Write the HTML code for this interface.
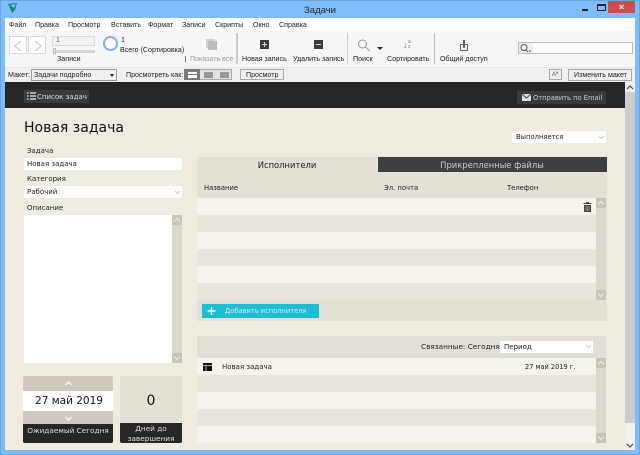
<!DOCTYPE html>
<html lang="ru"><head><meta charset="utf-8"><title>Задачи</title>
<style>
html,body{margin:0;padding:0;width:640px;height:455px;overflow:hidden;background:#7fbdf9}
*{box-sizing:border-box}
#r{position:relative;width:640px;height:455px;overflow:hidden;font-family:"Liberation Sans",sans-serif;font-size:7.1px;color:#222}
.a{position:absolute}
.t{position:absolute;white-space:nowrap;line-height:10px}
.v{font-family:"DejaVu Sans",sans-serif;font-size:7px}
.sb{position:absolute;background:#dcd8cd}
.sb i{position:absolute;left:0;width:100%;height:10px;background:#c9c4b8;display:block}
.sb i svg{position:absolute;left:2px;top:3px}
</style></head><body><div id="r">
<!-- frame -->
<div class="a" style="left:0;top:0;width:640px;height:455px;background:#7fbdf9;border:1px solid #6aa6dc"></div>
<svg class="a" style="left:7px;top:2px" width="12" height="12" viewBox="0 0 12 12"><path d="M1 2L10 1L8 8L5 11L3 6Z" fill="#1d7f8c"/><path d="M3 3L9 2L7 6Z" fill="#5fd0d8"/></svg>
<div class="t" style="left:0;width:640px;text-align:center;top:5px;font-size:9.5px;line-height:11px;color:#23282e;">Задачи</div>
<div class="a" style="left:582px;top:9px;width:6px;height:2px;background:#222"></div>
<div class="a" style="left:597px;top:4px;width:9px;height:7px;border:1px solid #223;border-top-width:2px"></div>
<div class="a" style="left:608px;top:1px;width:27px;height:12px;background:#c75050"></div>
<div class="t" style="left:608px;top:2px;width:27px;text-align:center;color:#fff;font-size:9px;font-weight:bold">×</div>
<!-- menu -->
<div class="a" style="left:5px;top:18px;width:630px;height:13px;background:#fff"></div>
<div class="t" style="left:9px;top:20px">Файл</div>
<div class="t" style="left:35px;top:20px">Правка</div>
<div class="t" style="left:68px;top:20px">Просмотр</div>
<div class="t" style="left:111px;top:20px">Вставить</div>
<div class="t" style="left:148px;top:20px">Формат</div>
<div class="t" style="left:182px;top:20px">Записи</div>
<div class="t" style="left:215px;top:20px">Скрипты</div>
<div class="t" style="left:253px;top:20px">Окно</div>
<div class="t" style="left:279px;top:20px">Справка</div>
<!-- toolbar -->
<div class="a" style="left:5px;top:31px;width:630px;height:36px;background:#f5f6f7"></div>
<div class="a" style="left:5px;top:67px;width:630px;height:15px;background:#f0f0f0;border-top:1px solid #e6e6e6"></div>
<div class="a" style="left:9px;top:36px;width:18px;height:18px;background:#fff;border:1px solid #d8d8d8"></div>
<div class="a" style="left:28px;top:36px;width:18px;height:18px;background:#fff;border:1px solid #d8d8d8"></div>
<svg class="a" style="left:9px;top:36px" width="37" height="18"><path d="M12 5L6 10L12 15M26 5L32 10L26 15" fill="none" stroke="#c4c4c4" stroke-width="1"/></svg>
<div class="a" style="left:52px;top:36px;width:43px;height:10px;background:#f2f2f2;border:1px solid #d9d9d9"></div>
<div class="t" style="left:56px;top:36px;font-size:7px;color:#666">1</div>
<div class="a" style="left:53px;top:50px;width:42px;height:3px;background:#d5d5d5"></div>
<div class="a" style="left:53px;top:48px;width:3px;height:6px;background:#f4f4f4;border:1px solid #bbb"></div>
<div class="t" style="left:57px;top:54px">Записи</div>
<div class="a" style="left:103px;top:36px;width:15px;height:15px;border:2px solid #8aa9ef;border-radius:50%;background:#fff"></div>
<div class="t" style="left:121px;top:35px">1</div>
<div class="t" style="left:120px;top:45px">Всего (Сортировка)</div>
<div class="a" style="left:206px;top:39px;width:9px;height:9px;background:#d2d2d2"></div>
<div class="a" style="left:208px;top:41px;width:9px;height:9px;background:#bdbdbd"></div>
<div class="a" style="left:185px;top:56px;width:1px;height:6px;background:#777"></div>
<div class="t" style="left:190px;top:54px;color:#999">Показать все</div>
<div class="a" style="left:236px;top:33px;width:2px;height:31px;background:#ccc"></div>
<div class="a" style="left:260px;top:40px;width:9px;height:9px;background:#3c3c3c"></div>
<div class="a" style="left:262px;top:44px;width:5px;height:1px;background:#ddd"></div>
<div class="a" style="left:264px;top:42px;width:1px;height:5px;background:#ddd"></div>
<div class="t" style="left:242px;top:54px">Новая запись</div>
<div class="a" style="left:314px;top:40px;width:9px;height:9px;background:#3c3c3c"></div>
<div class="a" style="left:316px;top:44px;width:5px;height:1px;background:#ddd"></div>
<div class="t" style="left:293px;top:54px">Удалить запись</div>
<div class="a" style="left:347px;top:33px;width:1px;height:31px;background:#ccc"></div>
<svg class="a" style="left:357px;top:39px" width="14" height="13"><circle cx="5.500" cy="5" r="4" fill="none" stroke="#999"/><path d="M8.500 8L13 12" stroke="#999"/></svg>
<div class="a" style="left:377px;top:47px;border:3px solid transparent;border-top:3px solid #222;border-bottom:0"></div>
<div class="t" style="left:353px;top:54px">Поиск</div>
<div class="t" style="left:403px;top:40px;font-size:9px;color:#777">↓</div>
<div class="t" style="left:408px;top:40px;font-size:5px;line-height:5px;color:#777">a<br>z</div>
<div class="t" style="left:387px;top:54px">Сортировать</div>
<div class="a" style="left:434px;top:33px;width:1px;height:31px;background:#bbb"></div>
<div class="a" style="left:460px;top:44px;width:8px;height:7px;border:1px solid #666"></div>
<div class="a" style="left:463px;top:40px;width:2px;height:8px;background:#666"></div>
<div class="t" style="left:440px;top:54px">Общий доступ</div>
<div class="a" style="left:518px;top:42px;width:115px;height:12px;background:#fff;border:1px solid #bbb"></div>
<div class="a" style="left:519px;top:43px;width:14px;height:10px;background:#eee"></div>
<svg class="a" style="left:520px;top:44px" width="12" height="9"><circle cx="4" cy="3.500" r="3" fill="none" stroke="#555"/><path d="M6 6L8 8M9 7h2" stroke="#555"/></svg>
<!-- layout bar -->
<div class="t" style="left:8px;top:70px">Макет:</div>
<div class="a" style="left:31px;top:69px;width:86px;height:12px;background:#f0f0f0;border:1px solid #999"></div>
<div class="t" style="left:34px;top:70px">Задачи подробно</div>
<div class="a" style="left:110px;top:74px;border:2px solid transparent;border-top:3px solid #222;border-bottom:0"></div>
<div class="t" style="left:126px;top:70px">Просмотреть как:</div>
<div class="a" style="left:184px;top:69px;width:48px;height:11px;background:#e2e2e2;border:1px solid #aaa"></div>
<div class="a" style="left:184px;top:69px;width:16px;height:11px;background:#7a7a7a"></div>
<div class="a" style="left:188px;top:72px;width:9px;height:6px;background:#fff"></div>
<div class="a" style="left:188px;top:74px;width:9px;height:1px;background:#777"></div>
<div class="a" style="left:204px;top:72px;width:9px;height:6px;background:#999"></div>
<div class="a" style="left:220px;top:72px;width:9px;height:6px;background:#999"></div>
<div class="a" style="left:240px;top:69px;width:44px;height:11px;background:#f0f0f0;border:1px solid #aaa"></div>
<div class="t" style="left:246px;top:70px">Просмотр</div>
<div class="a" style="left:549px;top:69px;width:13px;height:11px;background:#f0f0f0;border:1px solid #aaa"></div>
<div class="t" style="left:552px;top:70px;font-size:6px;color:#555">Aª</div>
<div class="a" style="left:568px;top:69px;width:64px;height:12px;background:#f0f0f0;border:1px solid #aaa"></div>
<div class="t" style="left:574px;top:70px">Изменить макет</div>
<!-- content -->
<div class="a" style="left:5px;top:81px;width:620px;height:369px;background:#f0ebe1"></div>
<div class="a" style="left:5px;top:82px;width:620px;height:26px;background:#262626"></div>
<div class="a" style="left:24px;top:90px;width:65px;height:13px;background:#3a3a3a"></div>
<svg class="a" style="left:27px;top:92px" width="9" height="9"><path d="M0 1h1.500M3 1h6M0 4h1.500M3 4h6M0 7h1.500M3 7h6" stroke="#eee" stroke-width="1.200"/></svg>
<div class="t v" style="left:37px;top:92px;color:#ddd">Список задач</div>
<div class="a" style="left:517px;top:91px;width:89px;height:13px;background:#3a3a3a"></div>
<div class="a" style="left:522px;top:94px;width:9px;height:7px;background:#ddd"></div>
<svg class="a" style="left:522px;top:94px" width="9" height="7"><path d="M0 0L4.500 4L9 0" fill="none" stroke="#444"/></svg>
<div class="t v" style="left:533px;top:93px;color:#ccc;font-size:6.700px">Отправить по Email</div>
<!-- page scrollbar -->
<div class="a" style="left:625px;top:82px;width:10px;height:368px;background:#f0f0f0"></div>
<div class="a" style="left:625px;top:92px;width:10px;height:331px;background:#cdcdcd"></div>
<svg class="a" style="left:626px;top:85px" width="8" height="6"><path d="M1 4L4 1L7 4" fill="none" stroke="#444" stroke-width="1.200"/></svg>
<svg class="a" style="left:626px;top:443px" width="8" height="6"><path d="M1 1L4 4L7 1" fill="none" stroke="#444" stroke-width="1.200"/></svg>
<div class="t v" style="left:24px;top:120px;font-size:14px;line-height:16px;color:#111">Новая задача</div>
<!-- left -->
<div class="t v" style="left:27px;top:146px">Задача</div>
<div class="a" style="left:24px;top:158px;width:158px;height:12px;background:#fff"></div>
<div class="t v" style="left:27px;top:159px">Новая задача</div>
<div class="t v" style="left:27px;top:174px">Категория</div>
<div class="a" style="left:24px;top:186px;width:158px;height:12px;background:#fff"></div>
<div class="t v" style="left:27px;top:187px">Рабочий</div>
<svg class="a" style="left:174px;top:190px" width="7" height="5"><path d="M1 1L3.500 3.500L6 1" fill="none" stroke="#ccc"/></svg>
<div class="t v" style="left:27px;top:203px">Описание</div>
<div class="a" style="left:24px;top:215px;width:158px;height:148px;background:#fff"></div>
<div class="sb" style="left:172px;top:215px;width:10px;height:148px"><i style="top:0"><svg width="6" height="4"><path d="M0 3.500L3 .5L6 3.500" fill="none" stroke="#eee"/></svg></i><i style="bottom:0"><svg width="6" height="4"><path d="M0 .5L3 3.500L6 .5" fill="none" stroke="#eee"/></svg></i></div>
<!-- date -->
<div class="a" style="left:23px;top:376px;width:90px;height:67px;background:#cfc9bd;border-radius:2px"></div>
<div class="a" style="left:23px;top:391px;width:90px;height:20px;background:#fff"></div>
<div class="a" style="left:23px;top:424px;width:90px;height:19px;background:#262626;border-radius:0 0 2px 2px"></div>
<svg class="a" style="left:65px;top:381px" width="7" height="5"><path d="M.5 4L3.500 1L6.500 4" fill="none" stroke="#fff" stroke-width="1.200"/></svg>
<svg class="a" style="left:65px;top:416px" width="7" height="5"><path d="M.5 1L3.500 4L6.500 1" fill="none" stroke="#fff" stroke-width="1.200"/></svg>
<div class="t v" style="left:24px;width:90px;text-align:center;top:395px;font-size:10.500px;line-height:12px;color:#111">27 май 2019</div>
<div class="t v" style="left:23px;width:90px;text-align:center;top:426px;font-size:7.300px;color:#ddd">Ожидаемый Сегодня</div>
<div class="a" style="left:120px;top:376px;width:62px;height:67px;background:#e4e0d5;border-radius:2px"></div>
<div class="a" style="left:120px;top:423px;width:62px;height:20px;background:#262626;border-radius:0 0 2px 2px"></div>
<div class="t v" style="left:120px;width:62px;text-align:center;top:393px;font-size:14px;line-height:16px;color:#111">0</div>
<div class="t v" style="left:120px;width:62px;text-align:center;top:424px;font-size:7.300px;line-height:9.500px;color:#ddd">Дней до<br>завершения</div>
<!-- status -->
<div class="a" style="left:512px;top:131px;width:94px;height:12px;background:#fff"></div>
<div class="t v" style="left:516px;top:132px;font-size:6.800px">Выполняется</div>
<svg class="a" style="left:598px;top:135px" width="7" height="5"><path d="M1 1L3.500 3.500L6 1" fill="none" stroke="#ccc"/></svg>
<!-- tabs panel -->
<div class="a" style="left:197px;top:157px;width:410px;height:164px;background:#e5e0d5"></div>
<div class="a" style="left:377px;top:157px;width:230px;height:15px;background:#3d3e40;border-left:1px solid #f0ebe1"></div>
<div class="t v" style="left:197px;width:180px;text-align:center;top:160px;font-size:8.400px;color:#222">Исполнители</div>
<div class="t v" style="left:377px;width:230px;text-align:center;top:160px;font-size:8.400px;color:#ccc">Прикрепленные файлы</div>
<div class="t v" style="left:204px;top:183px;font-size:6.800px">Название</div>
<div class="t v" style="left:384px;top:183px;font-size:6.800px">Эл. почта</div>
<div class="t v" style="left:507px;top:183px;font-size:6.800px">Телефон</div>
<div class="a" style="left:197px;top:198px;width:399px;height:17px;background:#f5f3ee"></div>
<div class="a" style="left:197px;top:215px;width:399px;height:17px;background:#e9e4dc"></div>
<div class="a" style="left:197px;top:232px;width:399px;height:17px;background:#f5f3ee"></div>
<div class="a" style="left:197px;top:249px;width:399px;height:17px;background:#e9e4dc"></div>
<div class="a" style="left:197px;top:266px;width:399px;height:17px;background:#f5f3ee"></div>
<div class="a" style="left:197px;top:283px;width:399px;height:17px;background:#e9e4dc"></div>
<svg class="a" style="left:583px;top:202px" width="9" height="10"><path d="M3 .5h3M.5 1.500h8" stroke="#444"/><path d="M1 3h7v7H1z" fill="#444"/><path d="M3 4v5M4.500 4v5M6 4v5" stroke="#ccc" stroke-width=".5"/></svg>
<div class="sb" style="left:596px;top:198px;width:10px;height:102px"><i style="top:0"><svg width="6" height="4"><path d="M0 3.500L3 .5L6 3.500" fill="none" stroke="#eee"/></svg></i><i style="bottom:0"><svg width="6" height="4"><path d="M0 .5L3 3.500L6 .5" fill="none" stroke="#eee"/></svg></i></div>
<div class="a" style="left:202px;top:304px;width:117px;height:14px;background:#1fbcd2"></div>
<svg class="a" style="left:207px;top:307px" width="9" height="8"><path d="M.5 4h8M4.500 0v8" stroke="#fff" stroke-width="1.500"/></svg>
<div class="t v" style="left:225px;top:306px;font-size:6.700px;color:#cdeff3">Добавить исполнителя</div>
<!-- related panel -->
<div class="a" style="left:197px;top:336px;width:409px;height:22px;background:#e3dfd7"></div>
<div class="t v" style="left:421px;top:342px;font-size:7.300px">Связанные: Сегодня</div>
<div class="a" style="left:500px;top:341px;width:93px;height:12px;background:#fff"></div>
<div class="t v" style="left:504px;top:342px">Период</div>
<svg class="a" style="left:585px;top:344px" width="7" height="5"><path d="M1 1L3.500 3.500L6 1" fill="none" stroke="#ccc"/></svg>
<div class="a" style="left:197px;top:358px;width:399px;height:17px;background:#f5f3ee"></div>
<div class="a" style="left:197px;top:375px;width:399px;height:17px;background:#e9e4dc"></div>
<div class="a" style="left:197px;top:392px;width:399px;height:17px;background:#f5f3ee"></div>
<div class="a" style="left:197px;top:409px;width:399px;height:17px;background:#e9e4dc"></div>
<div class="a" style="left:197px;top:426px;width:399px;height:17px;background:#f5f3ee"></div>
<svg class="a" style="left:203px;top:363px" width="9" height="8"><path d="M0 0h9v8H0z" fill="#111"/><path d="M0 2.500h9M3 2.500V8" stroke="#ddd" stroke-width=".7"/></svg>
<div class="t v" style="left:222px;top:362px">Новая задача</div>
<div class="t v" style="left:525px;top:362px;font-size:6.600px">27 май 2019 г.</div>
<div class="sb" style="left:596px;top:358px;width:10px;height:85px"><i style="top:0"><svg width="6" height="4"><path d="M0 3.500L3 .5L6 3.500" fill="none" stroke="#eee"/></svg></i><i style="bottom:0"><svg width="6" height="4"><path d="M0 .5L3 3.500L6 .5" fill="none" stroke="#eee"/></svg></i></div>
</div></body></html>
